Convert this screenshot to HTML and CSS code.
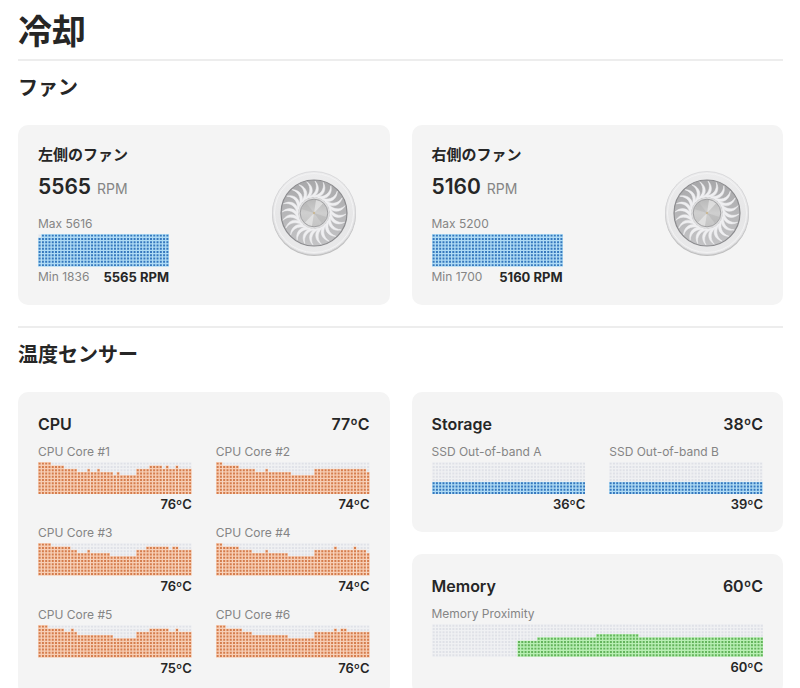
FILE: index.html
```html
<!DOCTYPE html>
<html lang="ja">
<head>
<meta charset="utf-8">
<meta name="viewport" content="width=device-width, initial-scale=1">
<title>冷却</title>
<link rel="stylesheet" href="styles.css">
</head>
<body>
<main class="page">
  <h1 class="page-title">冷却</h1>

  <section class="section">
    <h2 class="section-title">ファン</h2>
    <div class="columns">
      <article class="card fan">
        <div class="fan-info">
          <h3 class="fan-name">左側のファン</h3>
          <p class="fan-speed"><strong>5565</strong> <span>RPM</span></p>
          <div class="gauge">
            <p class="label">Max 5616</p>
            <svg class="chart chart-fan blue" data-runs="1x9 39x10"></svg>
            <p class="gauge-foot"><span class="label">Min 1836</span><strong class="value">5565 RPM</strong></p>
          </div>
        </div>
        <svg class="fan-icon" viewBox="0 0 88 88"></svg>
      </article>
      <article class="card fan">
        <div class="fan-info">
          <h3 class="fan-name">右側のファン</h3>
          <p class="fan-speed"><strong>5160</strong> <span>RPM</span></p>
          <div class="gauge">
            <p class="label">Max 5200</p>
            <svg class="chart chart-fan blue" data-runs="40x10"></svg>
            <p class="gauge-foot"><span class="label">Min 1700</span><strong class="value">5160 RPM</strong></p>
          </div>
        </div>
        <svg class="fan-icon" viewBox="0 0 88 88"></svg>
      </article>
    </div>
  </section>

  <section class="section">
    <h2 class="section-title">温度センサー</h2>
    <div class="columns">
      <article class="card">
        <header class="card-head"><h3>CPU</h3><span>77ºC</span></header>
        <div class="sensors">
          <div class="sensor"><p class="label">CPU Core #1</p><svg class="chart orange" data-runs="4x10 4x9 4x8 3x7 1x8 2x7 1x8 4x7 1x6 1x7 5x6 4x8 4x9 1x8 1x9 2x8 1x9 4x8"></svg><p class="value">76ºC</p></div>
          <div class="sensor"><p class="label">CPU Core #2</p><svg class="chart orange" data-runs="2x10 5x9 5x8 3x7 1x8 7x7 7x6 16x8 1x7"></svg><p class="value">74ºC</p></div>
          <div class="sensor"><p class="label">CPU Core #3</p><svg class="chart orange" data-runs="4x10 6x9 2x8 3x7 1x8 6x7 8x6 3x8 7x9 1x8 2x9 4x8"></svg><p class="value">76ºC</p></div>
          <div class="sensor"><p class="label">CPU Core #4</p><svg class="chart orange" data-runs="2x10 5x9 4x8 4x7 1x8 6x7 8x6 6x8 1x9 5x8 1x9 3x8 1x7"></svg><p class="value">74ºC</p></div>
          <div class="sensor"><p class="label">CPU Core #5</p><svg class="chart orange" data-runs="3x10 5x9 2x8 1x9 1x8 11x7 7x6 4x8 6x9 2x8 1x9 4x8"></svg><p class="value">75ºC</p></div>
          <div class="sensor"><p class="label">CPU Core #6</p><svg class="chart orange" data-runs="3x10 5x9 3x8 11x7 8x6 6x8 1x9 1x8 2x9 7x8"></svg><p class="value">76ºC</p></div>
        </div>
      </article>
      <div class="stack">
        <article class="card">
          <header class="card-head"><h3>Storage</h3><span>38ºC</span></header>
          <div class="sensors">
            <div class="sensor"><p class="label">SSD Out-of-band A</p><svg class="chart blue" data-runs="47x4"></svg><p class="value">36ºC</p></div>
            <div class="sensor"><p class="label">SSD Out-of-band B</p><svg class="chart blue" data-runs="47x4"></svg><p class="value">39ºC</p></div>
          </div>
        </article>
        <article class="card">
          <header class="card-head"><h3>Memory</h3><span>60ºC</span></header>
          <div class="sensor"><p class="label">Memory Proximity</p><svg class="chart green" data-runs="26x0 6x5 18x6 13x7 38x6"></svg><p class="value">60ºC</p></div>
        </article>
      </div>
    </div>
  </section>
</main>
<script src="charts.js"></script>
</body>
</html>
```

FILE: charts.js
```js
const NS = "http://www.w3.org/2000/svg";
const ROWS = 10;
const CELL = 10;

function add(parent, tag, attrs) {
  const el = document.createElementNS(NS, tag);
  for (const key in attrs) el.setAttribute(key, attrs[key]);
  parent.appendChild(el);
  return el;
}

// data-runs holds "columns x height" pairs, left to right
document.querySelectorAll(".chart").forEach((svg) => {
  const runs = svg.dataset.runs.split(" ").map((r) => r.split("x").map(Number));
  let x = 0;
  let offDots = "";
  let onDots = "";
  for (const [count, level] of runs) {
    if (level > 0) {
      add(svg, "rect", { class: "fill", x: x * CELL, y: (ROWS - level) * CELL, width: count * CELL, height: level * CELL });
    }
    if (level < ROWS) {
      add(svg, "rect", { class: "rest", x: x * CELL, y: 0, width: count * CELL, height: (ROWS - level) * CELL });
    }
    for (let i = 0; i < count; i++, x++) {
      for (let row = 0; row < ROWS; row++) {
        const dot = `M${x * CELL + 2} ${row * CELL + 2}h6v6h-6z`;
        if (row < ROWS - level) offDots += dot;
        else onDots += dot;
      }
    }
  }
  add(svg, "path", { class: "off", d: offDots });
  add(svg, "path", { class: "on", d: onDots });
  svg.setAttribute("viewBox", `0 0 ${x * CELL} ${ROWS * CELL}`);
});

document.querySelectorAll(".fan-icon").forEach((svg, n) => {
  const defs = add(svg, "defs", {});
  const gradient = (tag, id, attrs, stops) => {
    const g = add(defs, tag, { id: id + n, ...attrs });
    stops.forEach(([offset, color]) => add(g, "stop", { offset, "stop-color": color }));
  };
  gradient("linearGradient", "rim", { x1: 0, y1: 0, x2: 0, y2: 1 }, [[0, "#ececed"], [0.6, "#e6e6e7"], [1, "#e9e9ea"]]);
  gradient("linearGradient", "well", { x1: 0, y1: 0, x2: 0, y2: 1 }, [[0, "#a8a8aa"], [1, "#c4c4c6"]]);
  gradient("linearGradient", "hub", { x1: 0, y1: 0, x2: 0, y2: 1 }, [[0, "#b9b9b9"], [0.5, "#cfcfcf"], [1, "#c4c4c4"]]);

  add(svg, "circle", { cx: 44, cy: 45, r: 42, fill: "#999999", opacity: 0.6 });
  add(svg, "circle", { cx: 44, cy: 44, r: 41.5, fill: `url(#rim${n})`, stroke: "#d6d6d8", "stroke-width": 0.8 });
  add(svg, "circle", { cx: 44, cy: 44, r: 39.5, fill: "none", stroke: "#f3f3f4", "stroke-width": 1 });
  add(svg, "circle", { cx: 44, cy: 44, r: 33, fill: `url(#well${n})`, stroke: "#8b8b8e", "stroke-width": 1.2 });
  for (let i = 0; i < 24; i++) {
    add(svg, "path", {
      d: "M38 28C45 26 48.5 19 45 12C51 18 49 27 40 29Z",
      fill: "#efeff1", stroke: "#efeff1", "stroke-width": 0.5,
      transform: `rotate(${i * 15} 44 44)`
    });
  }
  add(svg, "circle", { cx: 44, cy: 44, r: 15.5, fill: "#dededf" });
  add(svg, "circle", { cx: 44, cy: 44, r: 13.8, fill: `url(#hub${n})`, stroke: "#9b9b9d", "stroke-width": 0.9 });
  add(svg, "path", { d: "M44 44L31.5 40A13 13 0 0 1 36 33.5Z", fill: "#b0b0b0", opacity: 0.4 });
  add(svg, "path", { d: "M44 44L46 31A13 13 0 0 1 53 34.5Z", fill: "#eeeeee", opacity: 0.6 });
  add(svg, "path", { d: "M44 44L56.5 48A13 13 0 0 1 52 54.5Z", fill: "#aaaaaa", opacity: 0.4 });
  add(svg, "path", { d: "M44 44L42 57A13 13 0 0 1 35 53.5Z", fill: "#eeeeee", opacity: 0.6 });
  add(svg, "circle", { cx: 44, cy: 44, r: 1.2, fill: "#c9b896" });
});
```

FILE: styles.css
```css
* {
  box-sizing: border-box;
}

body {
  margin: 0;
  background: #fff;
  color: #262626;
  font-family: Inter, "Noto Sans CJK JP", sans-serif;
  font-size: 13px;
  line-height: 16px;
}

h1, h2, h3, p {
  margin: 0;
}

.page {
  padding: 10px 17px 0 18px;
}

.page-title {
  font-size: 34px;
  line-height: 44px;
  font-weight: 700;
  padding-bottom: 5px;
}

.section {
  border-top: 2px solid #ededed;
  padding-bottom: 21px;
}

.section-title {
  font-size: 20px;
  line-height: 24px;
  font-weight: 700;
  padding: 15px 0 25px;
}

.columns {
  display: grid;
  grid-template-columns: 1fr 1fr;
  gap: 22px;
}

.stack {
  display: flex;
  flex-direction: column;
  gap: 22px;
}

.card {
  background: #f4f4f4;
  border-radius: 10px;
  padding: 20px;
}

.fan {
  display: flex;
  justify-content: space-between;
}

.fan-name {
  font-size: 15px;
  line-height: 20px;
  font-weight: 700;
}

.fan-speed {
  font-size: 14px;
  line-height: 26px;
  margin-top: 9px;
  color: #858585;
}

.fan-speed strong {
  font-size: 21px;
  font-weight: 600;
  color: #262626;
  margin-right: 2px;
}

.gauge {
  display: flex;
  flex-direction: column;
  margin-top: 14px;
}

.gauge-foot {
  display: flex;
  justify-content: space-between;
  gap: 14px;
  margin-top: 2px;
}

.gauge-foot .value {
  font-weight: 700;
  margin: 0;
}

.fan-icon {
  width: 88px;
  height: 88px;
  margin: 24px 12px 0 0;
}

.label {
  font-size: 12px;
  color: #858585;
}

.value {
  font-size: 13px;
  font-weight: 600;
  text-align: right;
  margin-top: 2px;
}

.card-head {
  display: flex;
  justify-content: space-between;
  font-size: 16px;
  line-height: 24px;
  font-weight: 600;
  margin-bottom: 8px;
}

.card-head h3 {
  font: inherit;
}

.sensors {
  display: grid;
  grid-template-columns: 1fr 1fr;
  gap: 13px 24px;
}

.chart {
  display: block;
  width: 100%;
  margin-top: 2px;
}

.chart-fan {
  width: 131px;
  align-self: flex-end;
}

.rest { fill: #f0f1f3; }
.off { fill: #dfe1e7; }

.orange .fill { fill: #f7ceb5; }
.orange .on { fill: #d47c4c; }
.blue .fill { fill: #b0dcf5; }
.blue .on { fill: #3577bd; }
.green .fill { fill: #b9efb4; }
.green .on { fill: #63b35b; }
```
